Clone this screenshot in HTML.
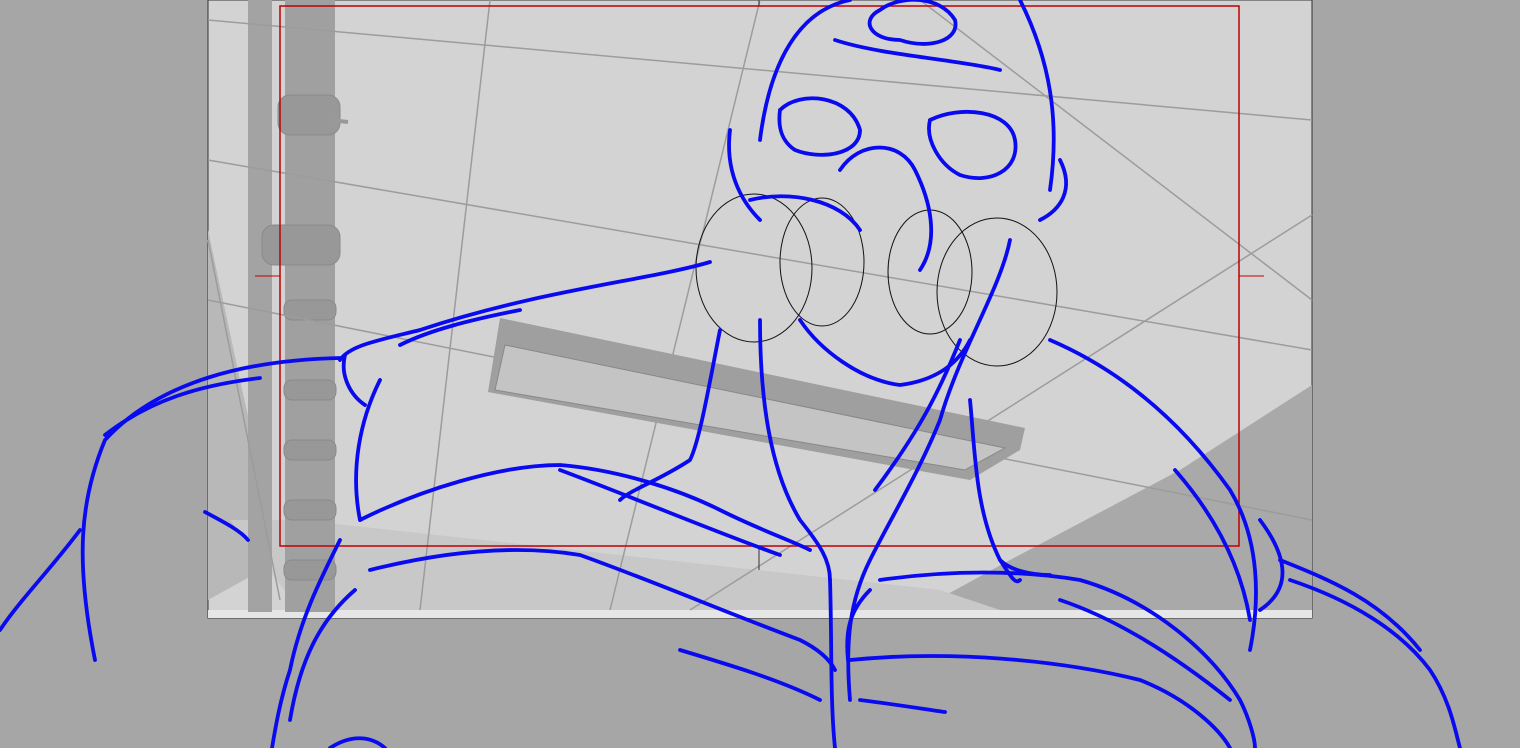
<!DOCTYPE html>
<html><head><meta charset="utf-8"><style>html,body{margin:0;padding:0;background:#a6a6a6;overflow:hidden}svg{display:block}</style></head><body>
<svg width="1520" height="748" viewBox="0 0 1520 748" xmlns="http://www.w3.org/2000/svg">
<rect width="1520" height="748" fill="#a6a6a6"/>
<rect x="208" y="0" width="1104" height="618" fill="#d3d3d3" stroke="#333" stroke-width="1"/>
<polygon points="1312,385 1312,612 915,612 1010,560 1180,470" fill="#a9a9a9"/>
<polygon points="208,230 240,380 280,560 208,600" fill="#b8b8b8"/>
<polygon points="230,520 300,610 1000,610 940,590 300,520" fill="#c8c8c8"/>
<rect x="208" y="610" width="1104" height="8" fill="#e6e6e6"/>
<!-- pipes -->
<rect x="248" y="0" width="24" height="612" fill="#a3a3a3"/>
<rect x="285" y="0" width="50" height="612" fill="#a0a0a0"/>
<g fill="#989898" stroke="#8a8a8a">
<rect x="278" y="95" width="62" height="40" rx="12"/>
<rect x="262" y="225" width="78" height="40" rx="12"/>
<rect x="284" y="300" width="52" height="20" rx="8"/>
<rect x="284" y="380" width="52" height="20" rx="8"/>
<rect x="284" y="440" width="52" height="20" rx="8"/>
<rect x="284" y="500" width="52" height="20" rx="8"/>
<rect x="284" y="560" width="52" height="20" rx="8"/>
</g>
<line x1="330" y1="120" x2="348" y2="122" stroke="#999" stroke-width="4"/>
<g stroke="#9c9c9c" stroke-width="1.5" fill="none">
<line x1="208" y1="20" x2="1312" y2="120"/>
<line x1="208" y1="160" x2="1312" y2="350"/>
<line x1="208" y1="300" x2="1312" y2="520"/>
<line x1="490" y1="0" x2="420" y2="610"/>
<line x1="920" y1="0" x2="1312" y2="300"/>
<line x1="760" y1="0" x2="610" y2="610"/>
<line x1="1312" y1="215" x2="690" y2="610"/>
<line x1="208" y1="240" x2="280" y2="600"/>
</g>
<polygon points="500,318 1025,428 1020,450 970,480 488,392" fill="#9f9f9f"/>
<polygon points="505,345 1005,448 965,470 495,390" fill="#c4c4c4" stroke="#888"/>
<rect x="280" y="6" width="959" height="540" fill="none" stroke="#c00000" stroke-width="1.5"/>
<line x1="255" y1="276" x2="280" y2="276" stroke="#c00000"/><line x1="1239" y1="276" x2="1264" y2="276" stroke="#c00000"/>
<line x1="759" y1="0" x2="759" y2="6" stroke="#333"/><line x1="759" y1="546" x2="759" y2="570" stroke="#333"/>
<g fill="none" stroke="#111" stroke-width="1">
<ellipse cx="754" cy="268" rx="58" ry="74"/>
<ellipse cx="822" cy="262" rx="42" ry="64"/>
<ellipse cx="930" cy="272" rx="42" ry="62"/>
<ellipse cx="997" cy="292" rx="60" ry="74"/>
</g>
<g fill="none" stroke="#0a0af0" stroke-width="3.8" stroke-linecap="round" stroke-linejoin="round">
<path d="M760 140 C770 60 800 10 850 0"/>
<path d="M1020 0 C1050 60 1060 120 1050 190"/>
<path d="M880 10 C900 -5 940 -5 955 20 C960 40 930 50 900 40 C870 40 860 20 880 10"/>
<path d="M835 40 C880 55 960 60 1000 70"/>
<path d="M730 130 C725 170 740 200 760 220"/>
<path d="M1060 160 C1075 190 1060 210 1040 220"/>
<path d="M780 110 C800 90 850 95 860 130 C860 155 820 160 795 150 C780 140 778 125 780 110"/>
<path d="M930 120 C960 105 1010 110 1015 140 C1020 170 990 185 960 175 C940 165 925 140 930 120"/>
<path d="M840 170 C860 140 900 140 915 170 C930 200 940 240 920 270"/>
<path d="M750 200 C790 190 840 200 860 230"/>
<path d="M800 320 C820 350 860 380 900 385 C940 380 960 360 970 340"/>
<path d="M710 262 C650 280 540 290 420 330 C380 340 350 345 340 360"/>
<path d="M340 358 C250 360 160 380 105 440 C80 500 75 560 95 660"/>
<path d="M260 378 C200 385 150 400 105 435"/>
<path d="M80 530 C50 570 20 600 0 630"/>
<path d="M345 355 C340 375 350 395 365 405"/>
<path d="M380 380 C360 420 350 470 360 520"/>
<path d="M400 345 C430 330 470 320 520 310"/>
<path d="M720 330 C710 380 700 440 690 460 C660 480 630 490 620 500"/>
<path d="M760 320 C760 400 770 470 800 520 C820 545 830 560 830 580"/>
<path d="M970 400 C975 450 975 510 1000 560 C1010 575 1015 585 1020 580"/>
<path d="M960 340 C940 390 920 430 875 490"/>
<path d="M1010 240 C1000 290 960 350 940 420 C920 470 890 520 870 560 C850 600 845 640 850 700"/>
<path d="M1050 340 C1120 370 1180 420 1230 490 C1260 540 1260 600 1250 650"/>
<path d="M1175 470 C1210 510 1240 560 1250 620"/>
<path d="M1260 520 C1290 560 1290 590 1260 610"/>
<path d="M1290 580 C1350 600 1400 630 1430 670 C1450 700 1455 730 1460 748"/>
<path d="M1280 560 C1330 580 1380 600 1420 650"/>
<path d="M880 580 C950 570 1020 570 1080 580 C1150 600 1210 650 1240 700 C1250 720 1255 740 1255 748"/>
<path d="M850 660 C950 650 1060 660 1140 680 C1190 700 1220 730 1230 748"/>
<path d="M360 520 C420 490 500 465 560 465 C620 470 680 490 720 510 C760 530 790 540 810 550"/>
<path d="M560 470 C640 500 710 530 780 555"/>
<path d="M370 570 C450 550 520 545 580 555 C650 580 720 610 800 640 C820 650 830 660 835 670"/>
<path d="M340 540 C320 580 300 620 290 670 C280 700 275 730 272 748"/>
<path d="M355 590 C320 620 300 660 290 720"/>
<path d="M830 580 C832 640 830 700 835 748"/>
<path d="M680 650 C730 665 780 680 820 700"/>
<path d="M860 700 C900 705 930 710 945 712"/>
<path d="M330 748 C350 735 370 735 385 748"/>
<path d="M205 512 C220 520 240 530 248 540"/>
<path d="M1060 600 C1120 620 1180 660 1230 700"/>
<path d="M870 590 C850 610 845 630 848 660"/>
<path d="M1000 560 C1010 570 1030 575 1050 575"/>
</g>
</svg>
</body></html>
